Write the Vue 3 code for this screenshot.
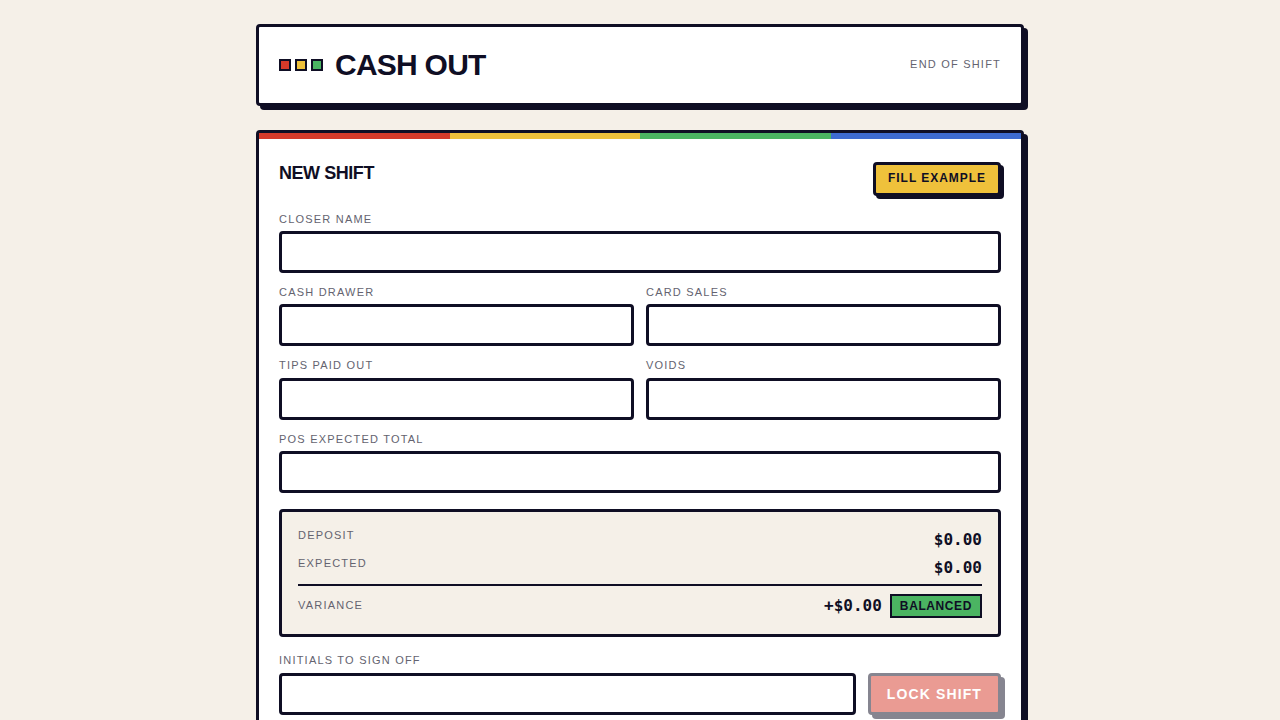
<script setup>
import { computed, reactive } from 'vue'

const form = reactive({
  closer: '',
  cash: '',
  card: '',
  tips: '',
  voids: '',
  expected: '',
  initials: '',
})

const fields = [
  { key: 'closer', label: 'Closer name', wide: true },
  { key: 'cash', label: 'Cash drawer' },
  { key: 'card', label: 'Card sales' },
  { key: 'tips', label: 'Tips paid out' },
  { key: 'voids', label: 'Voids' },
  { key: 'expected', label: 'POS expected total', wide: true },
]

const num = (value) => Number(value) || 0
const money = (value) => '$' + Math.abs(value).toFixed(2)

const deposit = computed(() => num(form.cash) + num(form.card) - num(form.tips) - num(form.voids))
const variance = computed(() => deposit.value - num(form.expected))
const varianceText = computed(() => (variance.value < 0 ? '-' : '+') + money(variance.value))
const status = computed(() => {
  if (Math.abs(variance.value) < 0.01) return 'Balanced'
  return variance.value < 0 ? 'Short' : 'Over'
})
const canLock = computed(() => form.closer.trim() !== '' && form.initials.trim() !== '')

function fillExample() {
  Object.assign(form, {
    closer: 'Sam',
    cash: '400',
    card: '900',
    tips: '80',
    voids: '20',
    expected: '1200',
  })
}
</script>

<template>
  <main class="page">
    <header class="panel masthead">
      <div class="brand">
        <div class="blocks" aria-hidden="true">
          <span class="block red"></span>
          <span class="block yellow"></span>
          <span class="block green"></span>
        </div>
        <h1>Cash Out</h1>
      </div>
      <span class="caption">End of shift</span>
    </header>

    <section class="panel">
      <div class="stripe" aria-hidden="true">
        <span class="red"></span>
        <span class="yellow"></span>
        <span class="green"></span>
        <span class="blue"></span>
      </div>
      <form class="body" @submit.prevent>
        <div class="head">
          <h2>New Shift</h2>
          <button type="button" class="fill" @click="fillExample">Fill example</button>
        </div>

        <div class="fields">
          <div v-for="f in fields" :key="f.key" class="field" :class="{ wide: f.wide }">
            <label class="caption" :for="f.key">{{ f.label }}</label>
            <input :id="f.key" v-model="form[f.key]" type="text" autocomplete="off" />
          </div>
        </div>

        <div class="summary">
          <div class="row">
            <span class="caption">Deposit</span>
            <span class="amount">{{ money(deposit) }}</span>
          </div>
          <div class="row">
            <span class="caption">Expected</span>
            <span class="amount">{{ money(num(form.expected)) }}</span>
          </div>
          <div class="row total">
            <span class="caption">Variance</span>
            <span class="result">
              <span class="amount">{{ varianceText }}</span>
              <span class="badge" :class="status === 'Balanced' ? 'green' : 'yellow'">{{ status }}</span>
            </span>
          </div>
        </div>

        <div class="sign">
          <div class="field">
            <label class="caption" for="initials">Initials to sign off</label>
            <input id="initials" v-model="form.initials" type="text" autocomplete="off" />
          </div>
          <button type="submit" class="lock" :disabled="!canLock">Lock shift</button>
        </div>
      </form>
    </section>
  </main>
</template>

<style>
body {
  margin: 0;
  background: #f5f0e8;
}
</style>

<style scoped>
.page {
  --ink: #0f0e24;
  box-sizing: border-box;
  max-width: 800px;
  margin: 0 auto;
  padding: 24px 16px;
  display: flex;
  flex-direction: column;
  gap: 24px;
  color: var(--ink);
  font-family: "Liberation Sans", Arial, sans-serif;
}

.panel {
  background: #fff;
  border: 3px solid var(--ink);
  border-radius: 4px;
  box-shadow: 4px 4px 0 var(--ink);
}

.masthead {
  display: flex;
  align-items: center;
  justify-content: space-between;
  padding: 20px;
}

.brand {
  display: flex;
  align-items: center;
  gap: 12px;
}

.blocks {
  display: flex;
  gap: 4px;
}

.block {
  box-sizing: border-box;
  width: 12px;
  height: 12px;
  border: 2px solid var(--ink);
}

.red { background: #d63a2a; }
.yellow { background: #efc13b; }
.green { background: #4bb462; }
.blue { background: #3e6bd0; }

h1,
h2 {
  margin: 0;
  font-weight: 700;
  letter-spacing: -0.025em;
  text-transform: uppercase;
}

h1 {
  font-size: 30px;
  line-height: 36px;
}

h2 {
  font-size: 18px;
  line-height: 22px;
}

.caption {
  color: #64636f;
  font-size: 11px;
  line-height: 1.4;
  letter-spacing: 0.11em;
  text-transform: uppercase;
}

.stripe {
  display: flex;
  height: 6px;
}

.stripe span {
  flex: 1;
}

.body {
  padding: 23px 20px;
}

.head {
  display: flex;
  align-items: flex-start;
  justify-content: space-between;
  margin-bottom: 16px;
}

button {
  border: 3px solid var(--ink);
  border-radius: 4px;
  font-family: inherit;
  font-weight: 700;
  line-height: 1.3;
  letter-spacing: 0.08em;
  text-transform: uppercase;
  cursor: pointer;
}

.fill {
  padding: 6px 12px;
  background: #efc13b;
  color: var(--ink);
  font-size: 12px;
  box-shadow: 3px 3px 0 var(--ink);
}

.fields {
  display: grid;
  grid-template-columns: 1fr 1fr;
  gap: 12px;
}

.field {
  display: flex;
  flex-direction: column;
  gap: 4px;
  min-width: 0;
}

.wide {
  grid-column: 1 / -1;
}

input {
  box-sizing: border-box;
  width: 100%;
  height: 42px;
  padding: 8px 12px;
  border: 3px solid var(--ink);
  border-radius: 4px;
  background: #fff;
  color: var(--ink);
  font-family: inherit;
  font-size: 16px;
}

.summary {
  display: flex;
  flex-direction: column;
  gap: 4px;
  margin: 16px 0;
  padding: 16px;
  border: 3px solid var(--ink);
  border-radius: 4px;
  background: #f5f0e8;
}

.row {
  display: flex;
  align-items: flex-start;
  justify-content: space-between;
}

.total {
  align-items: center;
  padding-top: 8px;
  border-top: 2px solid var(--ink);
}

.amount {
  font-family: "DejaVu Sans Mono", monospace;
  font-size: 16px;
  font-weight: 700;
  line-height: 24px;
}

.result {
  display: flex;
  align-items: center;
  gap: 8px;
}

.badge {
  padding: 2px 8px;
  border: 2px solid var(--ink);
  font-size: 12px;
  font-weight: 700;
  line-height: 16px;
  letter-spacing: 0.05em;
  text-transform: uppercase;
}

.sign {
  display: flex;
  align-items: flex-end;
  gap: 12px;
}

.sign .field {
  flex: 1;
}

.lock {
  height: 42px;
  padding: 8px 16px;
  background: #d63a2a;
  color: #fff;
  font-size: 14px;
  line-height: 20px;
  box-shadow: 4px 4px 0 var(--ink);
}

.lock:disabled {
  opacity: 0.5;
  cursor: not-allowed;
}
</style>
